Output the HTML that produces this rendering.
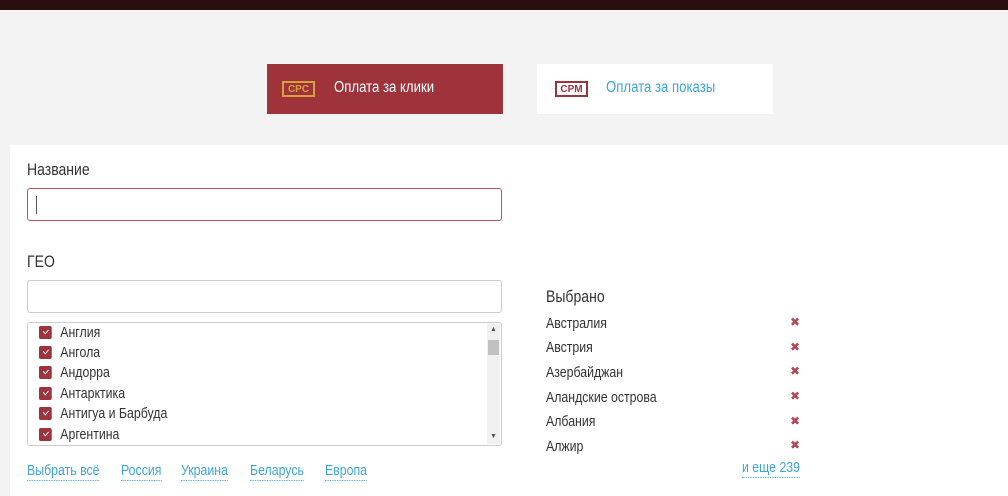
<!DOCTYPE html>
<html><head><meta charset="utf-8"><style>
*{margin:0;padding:0;box-sizing:border-box}
body{width:1008px;height:496px;overflow:hidden;background:#f3f3f3;font-family:"Liberation Sans",sans-serif;color:#333;position:relative}
.a{position:absolute;white-space:nowrap}
.t{transform:scaleX(0.85);transform-origin:0 50%}
.top{left:0;top:0;width:1008px;height:10px;background:#2b0f10}
.btn{top:64px;height:50px;width:236px}
.badge{position:absolute;top:17px;left:15px;width:33px;height:16px;border:2px solid;font:bold 10px/14px "Liberation Sans",sans-serif;text-align:center;padding-top:0}
.bt{position:absolute;top:14px;font-size:15.5px;line-height:20px}
.panel{left:10px;top:145px;width:998px;height:351px;background:#fff}
.lbl{font-size:16.5px;line-height:20px;color:#333}
.inp{left:27px;width:475px;height:33px;border:1px solid #ccc;border-radius:3px;background:#fff}
.item{left:39px;font-size:14.5px;line-height:20px}
.cb{display:inline-block;width:15px;height:13px;background:#9e333c;border-radius:2px;vertical-align:-2px;margin-right:10px;position:relative}
.cb:after{content:"";position:absolute;left:5px;top:2.5px;width:5px;height:2.5px;border-left:1.5px solid #fff;border-bottom:1.5px solid #fff;transform:rotate(-45deg)}
.lnk{top:462px;font-size:14.5px;line-height:18px;color:#3aa6dc;border-bottom:1px dotted #3aa6dc}
.sel{left:546px;font-size:14.5px;line-height:20px}
.x{left:790px;font:bold 12px/20px "DejaVu Sans",sans-serif;color:#b8464e}
</style></head><body>
<div class="a top"></div>
<div class="a btn" style="left:267px;background:#9e333c">
<div class="badge" style="border-color:#d8a03a;color:#d8a03a">CPC</div>
<div class="bt t" style="left:67px;color:#fff">Оплата за клики</div></div>
<div class="a btn" style="left:537px;background:#fff">
<div class="badge" style="left:18px;border-color:#9e333c;color:#9e333c">CPM</div>
<div class="bt t" style="left:69px;color:#3aa6dc">Оплата за показы</div></div>
<div class="a panel"></div>
<div class="a lbl t" style="left:27px;top:160px">Название</div>
<div class="a inp" style="top:188px;border-color:#c0505a"></div>
<div class="a" style="left:36px;top:196px;width:1px;height:18px;background:#555"></div>
<div class="a lbl t" style="left:27px;top:252px">ГЕО</div>
<div class="a inp" style="top:280px"></div>
<div class="a inp" style="top:322px;height:124px"></div>
<div class="a" style="left:487px;top:324px;width:13px;height:120px;background:#f1f1f1"></div>
<div class="a" style="left:488px;top:340px;width:11px;height:15px;background:#c1c1c1"></div>
<div class="a" style="left:490px;top:326px;font-size:7px;color:#555">▲</div>
<div class="a" style="left:490px;top:433px;font-size:7px;color:#555">▼</div>
<div class="a item t" style="top:323px"><span class="cb"></span>Англия</div>
<div class="a item t" style="top:343px"><span class="cb"></span>Ангола</div>
<div class="a item t" style="top:363px"><span class="cb"></span>Андорра</div>
<div class="a item t" style="top:384px"><span class="cb"></span>Антарктика</div>
<div class="a item t" style="top:404px"><span class="cb"></span>Антигуа и Барбуда</div>
<div class="a item t" style="top:425px"><span class="cb"></span>Аргентина</div>
<div class="a lnk t" style="left:27px">Выбрать всё</div>
<div class="a lnk t" style="left:121px">Россия</div>
<div class="a lnk t" style="left:181px">Украина</div>
<div class="a lnk t" style="left:250px">Беларусь</div>
<div class="a lnk t" style="left:325px">Европа</div>
<div class="a lbl t" style="left:546px;top:287px">Выбрано</div>
<div class="a sel t" style="top:314px">Австралия</div><div class="a x" style="top:312px">✖</div>
<div class="a sel t" style="top:338px">Австрия</div><div class="a x" style="top:337px">✖</div>
<div class="a sel t" style="top:363px">Азербайджан</div><div class="a x" style="top:361px">✖</div>
<div class="a sel t" style="top:388px">Аландские острова</div><div class="a x" style="top:386px">✖</div>
<div class="a sel t" style="top:412px">Албания</div><div class="a x" style="top:411px">✖</div>
<div class="a sel t" style="top:437px">Алжир</div><div class="a x" style="top:435px">✖</div>
<div class="a lnk t" style="left:742px;top:459px">и еще 239</div>
</body></html>
